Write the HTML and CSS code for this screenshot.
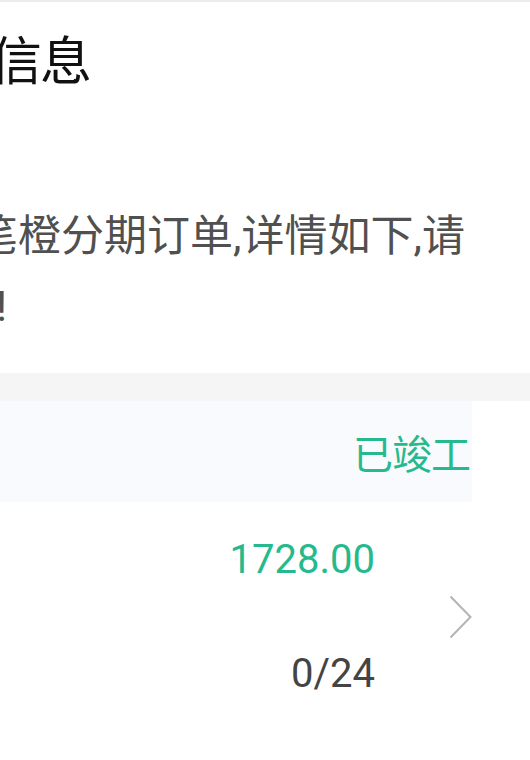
FILE: index.html
```html
<!DOCTYPE html>
<html lang="zh-CN">
<head>
  <meta charset="UTF-8">
  <title>订单信息</title>
  <link rel="stylesheet" href="styles.css">
</head>
<body>

<div class="topline"></div>

<div class="info">
  <h1 class="info-title">订单信息</h1>
  <p class="info-text">您有一笔橙分期订单,详情如下,请查收!</p>
</div>

<div class="divider"></div>

<div class="order">
  <div class="order-head">
    <span class="status">已竣工</span>
  </div>
  <div class="order-body">
    <div class="order-values">
      <div class="amount">1728.00</div>
      <div class="terms">0/24</div>
    </div>
    <svg class="chevron" width="24" height="44" viewBox="0 0 24 44">
      <polyline points="1.5,1.5 21.5,22 1.5,42.5" fill="none" stroke="#b4b4b4" stroke-width="2"/>
    </svg>
  </div>
</div>

</body>
</html>
```

FILE: styles.css
```css
html, body {
  margin: 0;
  padding: 0;
  background: #fff;
  overflow: hidden;
  font-family: Roboto, "Noto Sans CJK SC", sans-serif;
}
.topline {
  height: 2px;
  background: #ececec;
}
.info {
  padding: 31px 0 32px;
}
.info-title {
  margin: 0 0 0 -110px;
  font-size: 52px;
  font-weight: normal;
  line-height: 60px;
  letter-spacing: -2px;
  color: #111;
}
.info-text {
  width: 575px;
  margin: 108px 0 0 -90px;
  text-indent: -64px;
  font-size: 43px;
  line-height: 70px;
  color: #505050;
}
.divider {
  height: 28px;
  background: #f5f5f5;
}
.order {
  padding-right: 58px;
}
.order-head {
  height: 101px;
  display: flex;
  align-items: center;
  justify-content: flex-end;
  padding-right: 2px;
  background: #f8fafd;
}
.status {
  font-size: 40px;
  letter-spacing: -1px;
  color: #26b98d;
}
.order-body {
  display: flex;
  align-items: center;
  justify-content: flex-end;
  gap: 74px;
  padding: 29px 0;
}
.order-values {
  display: flex;
  flex-direction: column;
  align-items: flex-end;
  gap: 57px;
  font-size: 40px;
  line-height: 57px;
}
.amount { color: #26b98d; }
.terms { color: #444; }
.chevron { display: block; margin-right: -1px; }
```
